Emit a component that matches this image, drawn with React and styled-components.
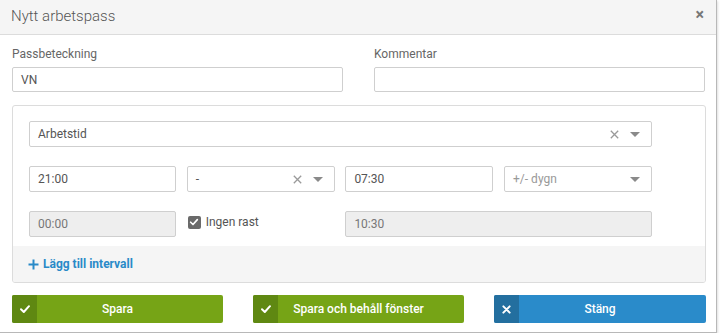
import React from "react";
import styled, { createGlobalStyle } from "styled-components";

const Global = createGlobalStyle`
  html, body { margin: 0; padding: 0; background: #ffffff; }
  body { font-family: Roboto, "Liberation Sans", Arial, sans-serif; }
  * { box-sizing: border-box; }
`;

const Modal = styled.div`
  width: 717px;
  height: 333px;
  background: #fff;
  border-right: 1px solid #b8b8b8;
  border-bottom: 1px solid #b8b8b8;
  box-shadow: 1px 1px 2px rgba(0,0,0,0.12);
  display: flex;
  flex-direction: column;
`;

const Header = styled.div`
  height: 35px;
  background: #f5f5f5;
  border-bottom: 1px solid #dcdcdc;
  display: flex;
  align-items: center;
  justify-content: space-between;
  padding: 0 12px 0 11px;
`;

const Title = styled.div`
  font-size: 15px;
  font-weight: 300;
  color: #555;
  padding-bottom: 2px;
`;

const Close = styled.span`
  font-size: 16px;
  font-weight: 700;
  color: #777;
  line-height: 1;
  margin-top: -4px;
`;

const Body = styled.div`
  padding: 12px 11px 0 12px;
  display: flex;
  flex-direction: column;
`;

const TopRow = styled.div`
  display: grid;
  grid-template-columns: 331px 331px;
  column-gap: 31px;
`;

const Field = styled.div`
  display: flex;
  flex-direction: column;
`;

const Label = styled.label`
  font-size: 12px;
  color: #666;
  height: 20px;
  line-height: 14px;
`;

const Input = styled.div`
  height: ${p => p.$h || 25}px;
  border: 1px solid #cfcfcf;
  border-radius: 2px;
  background: ${p => (p.$disabled ? "#eeeeee" : "#fff")};
  font-size: 12px;
  color: ${p => (p.$placeholder ? "#999" : p.$disabled ? "#777" : "#555")};
  display: flex;
  align-items: center;
  padding: 0 9px 0 8px;
  grid-column: ${p => p.$span || "auto"};
`;

const Value = styled.span`
  flex: 1;
`;

const Clear = styled.span`
  display: inline-flex;
  margin-right: 11px;
`;

const Arrow = styled.span`
  width: 0;
  height: 0;
  border-left: 5px solid transparent;
  border-right: 5px solid transparent;
  border-top: 5px solid #8a8a8a;
  margin-right: 2px;
`;

const Panel = styled.div`
  margin-top: 13px;
  width: 694px;
  border: 1px solid #dcdcdc;
  border-radius: 3px;
  overflow: hidden;
`;

const PanelMain = styled.div`
  padding: 15px 53px 9px 16px;
  display: grid;
  grid-template-columns: 147px 148px 148px 148px;
  column-gap: 10.7px;
  row-gap: 19px;
`;

const Full = styled.div`
  grid-column: 1 / -1;
  display: flex;
  flex-direction: column;
`;

const CheckWrap = styled.div`
  display: flex;
  align-items: center;
  gap: 5px;
  font-size: 12px;
  color: #555;
  padding-left: 1px;
  margin-top: -4px;
`;

const Box = styled.span`
  width: 13px;
  height: 13px;
  border-radius: 2px;
  background: #6a6a6a;
  display: inline-flex;
  align-items: center;
  justify-content: center;
`;

const PanelFooter = styled.div`
  height: 36px;
  background: #f5f5f5;
  display: flex;
  align-items: center;
  padding-left: 15px;
  gap: 4px;
  font-size: 12px;
  font-weight: 700;
  color: #2a8ac8;
`;

const Buttons = styled.div`
  margin-top: 12px;
  display: grid;
  grid-template-columns: 211px 211px 212px;
  column-gap: 30px;
`;

const Button = styled.div`
  height: 28px;
  border-radius: 2px;
  background: ${p => (p.$blue ? "#2a8bca" : "#76a416")};
  display: flex;
  align-items: stretch;
  color: #fff;
  font-size: 12px;
  font-weight: 500;
  overflow: hidden;
`;

const IconPart = styled.span`
  width: 25px;
  background: ${p => (p.$blue ? "#236f9f" : "#5f8812")};
  display: flex;
  align-items: center;
  justify-content: center;
`;

const ButtonLabel = styled.span`
  flex: 1;
  display: flex;
  align-items: center;
  justify-content: center;
  padding-right: 25px;
`;

const Check = ({ size = 12 }) => (
  <svg width={size} height={size} viewBox="0 0 12 12">
    <path d="M2 6.3 L4.8 9 L10 3.2" fill="none" stroke="#fff" strokeWidth="2" strokeLinecap="round" strokeLinejoin="round" />
  </svg>
);

const Cross = () => (
  <svg width="9" height="9" viewBox="0 0 10 10">
    <path d="M1.5 1.5 L8.5 8.5 M8.5 1.5 L1.5 8.5" stroke="#fff" strokeWidth="2.2" strokeLinecap="round" />
  </svg>
);

const ThinCross = () => (
  <svg width="9" height="9" viewBox="0 0 9 9">
    <path d="M0.8 0.8 L8.2 8.2 M8.2 0.8 L0.8 8.2" stroke="#9a9a9a" strokeWidth="1.3" />
  </svg>
);

const Plus = () => (
  <svg width="11" height="11" viewBox="0 0 11 11">
    <path d="M5.5 0.5 V10.5 M0.5 5.5 H10.5" stroke="#2a8ac8" strokeWidth="2" />
  </svg>
);

export default function App() {
  return (
    <>
      <Global />
      <Modal>
        <Header>
          <Title>Nytt arbetspass</Title>
          <Close>×</Close>
        </Header>
        <Body>
          <TopRow>
            <Field>
              <Label>Passbeteckning</Label>
              <Input>VN</Input>
            </Field>
            <Field>
              <Label>Kommentar</Label>
              <Input />
            </Field>
          </TopRow>
          <Panel>
            <PanelMain>
              <Full>
                <Input $h={26}>
                  <Value>Arbetstid</Value>
                  <Clear><ThinCross /></Clear>
                  <Arrow />
                </Input>
              </Full>
              <Input $h={26}>21:00</Input>
              <Input $h={26}>
                <Value>-</Value>
                <Clear><ThinCross /></Clear>
                <Arrow />
              </Input>
              <Input $h={26}>07:30</Input>
              <Input $h={26} $placeholder>
                <Value>+/- dygn</Value>
                <Arrow />
              </Input>
              <Input $h={26} $disabled>00:00</Input>
              <CheckWrap>
                <Box><Check size={10} /></Box>
                Ingen rast
              </CheckWrap>
              <Input $h={26} $disabled $span="3 / 5">10:30</Input>
            </PanelMain>
            <PanelFooter>
              <Plus />
              Lägg till intervall
            </PanelFooter>
          </Panel>
          <Buttons>
            <Button>
              <IconPart><Check /></IconPart>
              <ButtonLabel>Spara</ButtonLabel>
            </Button>
            <Button>
              <IconPart><Check /></IconPart>
              <ButtonLabel>Spara och behåll fönster</ButtonLabel>
            </Button>
            <Button $blue>
              <IconPart $blue><Cross /></IconPart>
              <ButtonLabel>Stäng</ButtonLabel>
            </Button>
          </Buttons>
        </Body>
      </Modal>
    </>
  );
}
